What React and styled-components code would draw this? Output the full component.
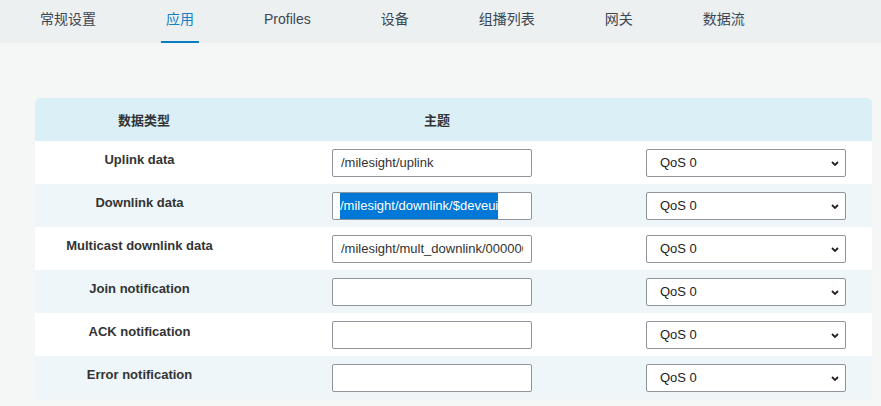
import React from "react";
import styled, { createGlobalStyle } from "styled-components";

const GlobalStyle = createGlobalStyle`
  html, body { margin: 0; padding: 0; }
  body {
    background: #f5f7f7;
    font-family: "Liberation Sans", Arial, "Noto Sans CJK SC", sans-serif;
    color: #333;
  }
  * { box-sizing: border-box; }
`;

const Page = styled.div`
  width: 881px;
  min-height: 406px;
  background: #f5f7f7;
`;

const NavBar = styled.nav`
  height: 43px;
  background: #ecf0f1;
  display: flex;
  gap: 60px;
  padding-left: 35px;
`;

const Tab = styled.div`
  height: 43px;
  padding: 11px 5px 0;
  font-size: 14px;
  line-height: 16px;
  color: ${(p) => (p.$active ? "#1581c4" : "#3b4753")};
  border-bottom: 2px solid ${(p) => (p.$active ? "#0a7dc2" : "transparent")};
  white-space: nowrap;
`;

const Main = styled.main`
  padding: 55px 9px 0 35px;
`;

const Table = styled.div`
  background: #ffffff;
  border-radius: 5px 5px 0 0;
  overflow: hidden;
`;

const Row = styled.div`
  display: grid;
  grid-template-columns: 297px 314px 1fr;
  height: 43px;
  align-items: center;
  background: ${(p) => (p.$header ? "#dbeff7" : p.$alt ? "#eef6fa" : "#ffffff")};
`;

const LabelCell = styled.div`
  text-align: center;
  padding-right: ${(p) => (p.$header ? "79px" : "88px")};
  padding-bottom: ${(p) => (p.$header ? "0" : "6px")};
  font-size: 13px;
  font-weight: bold;
  color: #333;
  white-space: nowrap;
`;

const TopicHead = styled.div`
  width: 210px;
  text-align: center;
  font-size: 13px;
  font-weight: bold;
  color: #333;
`;

const Cell = styled.div`
  display: flex;
  align-items: center;
`;

const TextInput = styled.input`
  width: 200px;
  height: 28px;
  border: 1px solid #8e9499;
  border-radius: 2px;
  padding: 0 8px;
  font-family: "Liberation Sans", Arial, sans-serif;
  font-size: 13px;
  color: #333;
  background: #fff;
  outline: none;
`;

const FakeInput = styled.div`
  width: 200px;
  height: 28px;
  border: 1px solid #8e9499;
  border-radius: 2px;
  padding: 0 8px;
  font-size: 13px;
  font-family: "Liberation Sans", Arial, sans-serif;
  background: #fff;
  overflow: hidden;
  white-space: nowrap;
  line-height: 26px;
`;

const Selected = styled.span`
  display: inline-block;
  background: #0078d7;
  color: #fff;
  height: 26px;
  line-height: 26px;
  margin-left: -1px;
`;

const SelectWrap = styled.div`
  position: relative;
  width: 200px;
  height: 28px;
`;

const Select = styled.select`
  appearance: none;
  -webkit-appearance: none;
  width: 200px;
  height: 28px;
  border: 1px solid #8e9499;
  border-radius: 2px;
  padding: 0 24px 0 13px;
  font-family: "Liberation Sans", Arial, sans-serif;
  font-size: 13px;
  color: #222;
  background: #fff;
  outline: none;
`;

const Chevron = styled.svg`
  position: absolute;
  right: 7px;
  top: 12px;
  width: 8px;
  height: 5px;
  pointer-events: none;
`;

const rows = [
  { label: "Uplink data", value: "/milesight/uplink" },
  { label: "Downlink data", value: "/milesight/downlink/$deveui", selected: true },
  { label: "Multicast downlink data", value: "/milesight/mult_downlink/0000000000" },
  { label: "Join notification", value: "" },
  { label: "ACK notification", value: "" },
  { label: "Error notification", value: "" },
];

const tabs = ["常规设置", "应用", "Profiles", "设备", "组播列表", "网关", "数据流"];

export default function App() {
  return (
    <Page>
      <GlobalStyle />
      <NavBar>
        {tabs.map((t) => (
          <Tab key={t} $active={t === "应用"}>
            {t}
          </Tab>
        ))}
      </NavBar>
      <Main>
        <Table>
          <Row $header>
            <LabelCell $header>数据类型</LabelCell>
            <Cell>
              <TopicHead>主题</TopicHead>
            </Cell>
            <Cell />
          </Row>
          {rows.map((r, i) => (
            <Row key={r.label} $alt={i % 2 === 1}>
              <LabelCell>{r.label}</LabelCell>
              <Cell>
                {r.selected ? (
                  <FakeInput role="textbox">
                    <Selected>{r.value}</Selected>
                  </FakeInput>
                ) : (
                  <TextInput defaultValue={r.value} />
                )}
              </Cell>
              <Cell>
                <SelectWrap>
                  <Select defaultValue="0">
                    <option value="0">QoS 0</option>
                    <option value="1">QoS 1</option>
                    <option value="2">QoS 2</option>
                  </Select>
                  <Chevron viewBox="0 0 8 5">
                    <path d="M1 1 L4 4 L7 1" fill="none" stroke="#222" strokeWidth="1.8" />
                  </Chevron>
                </SelectWrap>
              </Cell>
            </Row>
          ))}
        </Table>
      </Main>
    </Page>
  );
}
